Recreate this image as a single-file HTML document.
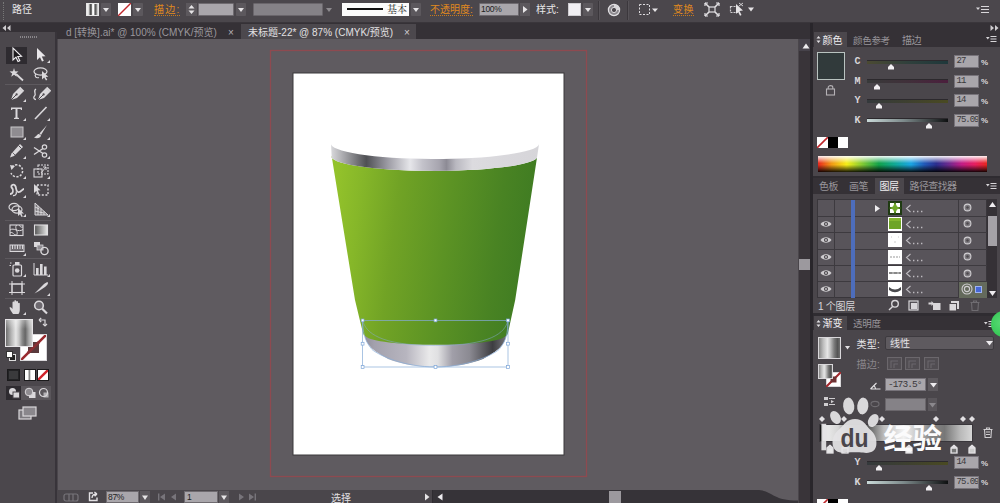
<!DOCTYPE html>
<html lang="zh-CN">
<head>
<meta charset="utf-8">
<title>Illustrator</title>
<style>
*{box-sizing:border-box;margin:0;padding:0}
html,body{width:1000px;height:503px;overflow:hidden;background:#4a464b}
body{position:relative;font-family:"Liberation Sans","Noto Sans CJK SC",sans-serif;font-size:11px;color:#d6d3d6}
.a{position:absolute}
#ctrl{left:0;top:0;width:1000px;height:23px;background:#4b474c;border-bottom:1px solid #3a363b}
#tabs{left:57px;top:23px;width:753px;height:16px;background:#353136}
#canvas{left:58px;top:39px;width:740px;height:451px;background:#5f5b60;overflow:hidden}
#tools{left:0;top:23px;width:57px;height:480px;background:#4b474c;border-right:2px solid #38343a}
#vscroll{left:798px;top:39px;width:12px;height:464px;background:#393439;border-left:1px solid #4a464b}
#status{left:58px;top:490px;width:740px;height:13px;background:#4a464b}
#right{left:810px;top:23px;width:190px;height:480px;background:#4a464b;border-left:3px solid #29262b}

#ctrl .dd{position:absolute;top:3px;height:13px;width:10px;background:#5c585d;border-radius:1px}
#ctrl .dd:after{content:"";position:absolute;left:2px;top:5px;border:3px solid transparent;border-top:4px solid #e6e4e6;border-bottom:0}
#ctrl .dd.dim{background:#55515600}
#ctrl .dd.dim:after{border-top-color:#8d8a8e}
#ctrl .inp{position:absolute;top:3px;height:13px;background:#a9a6ab;border:1px solid #6f6b70;border-radius:1px}
#ctrl .or{position:absolute;top:4px;color:#e08a1e;font-size:10px;line-height:12px;white-space:nowrap;border-bottom:1px dotted #c87a1a;height:12px}
#ctrl .wt{position:absolute;top:4px;color:#e9e7e9;font-size:10px;line-height:12px;white-space:nowrap}
#ctrl .sep{position:absolute;top:1px;width:1px;height:19px;background:#3b373c;border-right:1px solid #575358;box-sizing:content-box}

#tabs .t{position:absolute;top:4px;font-size:10px;line-height:12px;white-space:nowrap}
.lbl{white-space:nowrap;line-height:1}
</style>
</head>
<body>
<div id="ctrl" class="a">
<div class="a" style="left:3px;top:2px;width:2px;height:18px;border-left:1px dotted #777"></div>
<span class="wt" style="left:12px;top:4px">路径</span>
<div class="a" style="left:86px;top:3px;width:13px;height:13px;border:1px solid #e6e6e6;background:linear-gradient(90deg,#f4f4f4 0,#ddd 15%,#555 30%,#444 38%,#eee 50%,#fff 60%,#666 72%,#555 80%,#eee 100%)"></div>
<div class="dd" style="left:101px"></div>
<div class="a" style="left:118px;top:3px;width:13px;height:13px;background:#fff;overflow:hidden"><svg width="13" height="13" viewBox="0 0 13 13"><path d="M0,13 L13,0" stroke="#c0282d" stroke-width="1.4"/></svg></div>
<div class="dd" style="left:133px"></div>
<span class="or" style="left:154px;letter-spacing:1.2px">描边:</span>
<div class="a" style="left:186px;top:3px;width:11px;height:13px;background:#5c585d"><svg width="11" height="13" viewBox="0 0 11 13"><path d="M2.5,5.5 L5.5,2 L8.5,5.5 Z M2.5,7.5 L5.5,11 L8.5,7.5 Z" fill="#e6e4e6"/></svg></div>
<div class="inp" style="left:198px;width:36px"></div>
<div class="dd" style="left:236px"></div>
<div class="inp" style="left:253px;width:70px;background:#858287;border-color:#6a666b"></div>
<div class="dd dim" style="left:324px"></div>
<div class="a" style="left:342px;top:3px;width:67px;height:13px;background:#fbfbfb"><div class="a" style="left:5px;top:5px;width:36px;height:2px;background:#111"></div><span class="a" style="left:45px;top:0;font-size:10px;line-height:13px;color:#222;font-family:'Liberation Serif','Noto Serif CJK SC',serif">基本</span></div>
<div class="dd" style="left:411px"></div>
<span class="or" style="left:430px">不透明度:</span>
<div class="inp" style="left:479px;width:40px"><span class="a" style="left:1px;top:-1px;font-size:8.5px;line-height:13px;color:#222;letter-spacing:-0.3px">100%</span></div>
<div class="a" style="left:520px;top:3px;width:10px;height:13px;background:#5c585d"><svg width="10" height="13" viewBox="0 0 10 13"><path d="M3,3 L7.5,6.5 L3,10 Z" fill="#e6e4e6"/></svg></div>
<span class="wt" style="left:536px">样式:</span>
<div class="a" style="left:568px;top:3px;width:13px;height:13px;background:#f1eff3;border:1px solid #cfcdd1"></div>
<div class="dd" style="left:583px"></div>
<div class="sep" style="left:598px"></div>
<svg class="a" style="left:607px;top:3px" width="14" height="14" viewBox="0 0 14 14"><circle cx="7" cy="7" r="5.6" fill="#8e8b90" stroke="#e2e0e3" stroke-width="1.2"/><circle cx="7" cy="7" r="2.6" fill="#4b474c" stroke="#dcdadd" stroke-width="1"/><path d="M7,1.4 A5.6,5.6 0 0 1 12.6,7 L9.6,7 A2.6,2.6 0 0 0 7,4.4 Z" fill="#d8d6d9"/></svg>
<div class="sep" style="left:627px"></div>
<svg class="a" style="left:638px;top:3px" width="22" height="14" viewBox="0 0 22 14"><rect x="1.5" y="1.5" width="10" height="10" fill="none" stroke="#dedcdf" stroke-width="1" stroke-dasharray="2 1.5"/><path d="M14,5.5 L20,5.5 L17,9 Z" fill="#e6e4e6"/></svg>
<span class="or" style="left:673px;letter-spacing:0.5px">变换</span>
<svg class="a" style="left:704px;top:2px" width="16" height="16" viewBox="0 0 16 16"><rect x="5" y="5" width="6" height="5" fill="none" stroke="#e2e0e3" stroke-width="1.2"/><path d="M1,1 L5,5 M15,1 L11,5 M1,14 L5,10 M15,14 L11,10" stroke="#e2e0e3" stroke-width="1.6"/><path d="M1,1 h3 M1,1 v3 M15,1 h-3 M15,1 v3 M1,14 h3 M1,14 v-3 M15,14 h-3 M15,14 v-3" stroke="#e2e0e3" stroke-width="1.2"/></svg>
<svg class="a" style="left:729px;top:2px" width="28" height="16" viewBox="0 0 28 16"><rect x="1.5" y="4.5" width="7" height="6" fill="none" stroke="#cfcdd0" stroke-width="1.2" stroke-dasharray="2 1"/><path d="M7,2 L14,8.5 L10.5,9 L12.5,13 L11,13.8 L9,9.8 L7,12 Z" fill="#e6e4e6"/><path d="M10,1 l4,3 M14,1 l-4,3" stroke="#cfcdd0" stroke-width="1"/><path d="M19,5.5 L25,5.5 L22,9.5 Z" fill="#e6e4e6"/></svg>
<svg class="a" style="left:976px;top:5px" width="13" height="10" viewBox="0 0 13 10"><path d="M0,2.5 L4,2.5 L2,5 Z" fill="#d8d6d9"/><path d="M5,1.5 h8 M5,4.5 h8 M5,7.5 h8" stroke="#d8d6d9" stroke-width="1.2"/></svg>
</div>
<div id="tabs" class="a">
<span class="t" id="t1" style="left:9px;color:#9a979c">d [转换].ai* @ 100% (CMYK/预览)</span>
<span class="t" style="left:171px;color:#b5b2b6;font-size:10px">×</span>
<div class="a" style="left:184px;top:1px;width:175px;height:15px;background:#4c484d"></div>
<span class="t" id="t2" style="left:191px;color:#e2e0e2">未标题-22* @ 87% (CMYK/预览)</span>
<span class="t" style="left:347px;color:#d2d0d3;font-size:10px">×</span>
</div>
<div id="canvas" class="a">
<svg class="a" style="left:0;top:0" width="740" height="451" viewBox="58 39 740 451">
<defs>
<linearGradient id="gGreen" x1="331" y1="225" x2="538" y2="250" gradientUnits="userSpaceOnUse">
<stop offset="0" stop-color="#93c22b"/><stop offset="0.12" stop-color="#86b729"/><stop offset="0.3" stop-color="#71a325"/><stop offset="0.55" stop-color="#5c9324"/><stop offset="0.8" stop-color="#498323"/><stop offset="1" stop-color="#3d7a22"/>
</linearGradient>
<linearGradient id="gRim" x1="331" y1="0" x2="539" y2="0" gradientUnits="userSpaceOnUse">
<stop offset="0" stop-color="#d9d9dc"/><stop offset="0.06" stop-color="#a9a9ad"/><stop offset="0.17" stop-color="#4f5054"/><stop offset="0.27" stop-color="#9a99a2"/><stop offset="0.38" stop-color="#e6e6ea"/><stop offset="0.44" stop-color="#c3c2ca"/><stop offset="0.52" stop-color="#a7a5af"/><stop offset="0.555" stop-color="#8d8b95"/><stop offset="0.6" stop-color="#b9b8c0"/><stop offset="0.68" stop-color="#dcdbdf"/><stop offset="1" stop-color="#d6d5d9"/>
</linearGradient>
<linearGradient id="gBase" x1="363" y1="0" x2="507" y2="0" gradientUnits="userSpaceOnUse">
<stop offset="0" stop-color="#8f8d98"/><stop offset="0.08" stop-color="#a3a1ad"/><stop offset="0.3" stop-color="#b7b5bf"/><stop offset="0.46" stop-color="#e9e9ea"/><stop offset="0.52" stop-color="#e0e0e2"/><stop offset="0.62" stop-color="#a19fa9"/><stop offset="0.74" stop-color="#8b8a92"/><stop offset="0.9" stop-color="#3d3d41"/><stop offset="1" stop-color="#77777c"/>
</linearGradient>
</defs>
<rect x="270.5" y="50.5" width="316" height="426" fill="none" stroke="#8e4a50" stroke-width="1.3"/>
<rect x="293" y="73" width="271" height="382" fill="#fff" stroke="#3a383b" stroke-width="1"/>
<path d="M364.5,334 C366,345 372,350 388,359 C400,364 418,367 435.5,367 C453,367 471,364 483,359 C499,350 505,345 506.5,334 Z" fill="url(#gBase)"/>
<path d="M331.6,155.8 A102.7,14.2 0 0 0 537,157.5 L515.2,300 L510.8,320 L508,333 Q507.5,336 505,336.5 A70,9.5 0 0 1 366,336.5 Q363.5,336 363,333 L359.8,320 L355,300 Z" fill="url(#gGreen)"/>
<path d="M331,143.2 A104,15.3 0 0 0 539,144.2 L537,157.5 A102.7,14.2 0 0 1 331.6,155.8 Z" fill="url(#gRim)"/>
<g fill="none" stroke="#86acd8" stroke-width="0.7">
<rect x="362.6" y="320.4" width="145.4" height="46.6"/>
<path d="M362.6,320.4 C366,333 380,345.5 435.5,345.5 C491,345.5 505,333 508,320.4" stroke-opacity="0.7"/>
<path d="M362.6,320.4 C363,332 364,340 372,349.5 C380,356 405,367 435.5,367 C466,367 491,356 499,349.5 C507,340 507.6,332 508,320.4"/>
</g>
<g fill="#fff" stroke="#7ea6d8" stroke-width="0.7">
<rect x="361.2" y="319" width="2.8" height="2.8"/><rect x="434.1" y="319" width="2.8" height="2.8"/><rect x="506.6" y="319" width="2.8" height="2.8"/>
<rect x="361.2" y="342.3" width="2.8" height="2.8"/><rect x="506.6" y="342.3" width="2.8" height="2.8"/>
<rect x="361.2" y="365.6" width="2.8" height="2.8"/><rect x="434.1" y="365.6" width="2.8" height="2.8"/><rect x="506.6" y="365.6" width="2.8" height="2.8"/>
</g>
</svg>
</div>
<div id="tools" class="a">
<div class="a" style="left:0;top:0;width:57px;height:9px;background:#353136"></div>
<svg class="a" style="left:2px;top:2px" width="10" height="6" viewBox="0 0 10 6"><path d="M4,0 L4,6 L0.5,3 Z M8.5,0 L8.5,6 L5,3 Z" fill="#cfcdd0"/></svg>
<div class="a" style="left:20px;top:13px;width:17px;height:2px;border-top:1px dotted #8a878b;border-bottom:1px dotted #8a878b"></div>
<div class="a" style="left:6px;top:24px;width:21px;height:17px;background:#2e2b30"></div>
<svg class="a" style="left:6.5px;top:23px" width="20" height="18" viewBox="0 0 20 18" fill="none" stroke="#dad8db" stroke-width="1.2"><path d="M6,2 L6,14 L9,11.2 L11,15.5 L12.8,14.7 L10.8,10.5 L14.5,10.3 Z" fill="#1d1b1e" stroke="#f2f0f3" stroke-width="1.1"/></svg>
<svg class="a" style="left:30.5px;top:23px" width="20" height="18" viewBox="0 0 20 18" fill="none" stroke="#dad8db" stroke-width="1.2"><path d="M6,2 L6,14 L9,11.2 L11,15.5 L12.8,14.7 L10.8,10.5 L14.5,10.3 Z" fill="#e9e7ea" stroke="none"/><path d="M19,14 L19,17 L16,17 Z" fill="#dad8db" stroke="none"/></svg>
<svg class="a" style="left:6.5px;top:42px" width="20" height="18" viewBox="0 0 20 18" fill="none" stroke="#dad8db" stroke-width="1.2"><path d="M7,3 L8,6.2 L11.5,6.5 L8.8,8.4 L9.8,11.8 L7,9.7 L4.2,11.8 L5.2,8.4 L2.5,6.5 L6,6.2 Z" fill="#dad8db" stroke="none"/><path d="M9,9 L16,15.5" stroke-width="1.8"/></svg>
<svg class="a" style="left:30.5px;top:42px" width="20" height="18" viewBox="0 0 20 18" fill="none" stroke="#dad8db" stroke-width="1.2"><ellipse cx="9.5" cy="6.5" rx="6.5" ry="3.6"/><path d="M5,9 C3,11 5,13.5 8,12.5"/><path d="M11,6 L11,14.5 L13.2,12.5 L15,15.5 L16.3,14.8 L14.7,12 L17.3,11.8 Z" fill="#dad8db" stroke="none"/></svg>
<svg class="a" style="left:6.5px;top:61.5px" width="20" height="18" viewBox="0 0 20 18" fill="none" stroke="#dad8db" stroke-width="1.2"><path d="M4,15 L6,9 L12,3 L16,7 L10,13 Z" fill="#dad8db" stroke="none"/><path d="M4,15 L9,10" stroke="#4b474c" stroke-width="1"/><circle cx="9.6" cy="9.4" r="1.1" fill="#4b474c" stroke="none"/><path d="M12.5,2.5 L16.5,6.5" stroke-width="2"/><path d="M19,14 L19,17 L16,17 Z" fill="#dad8db" stroke="none"/></svg>
<svg class="a" style="left:30.5px;top:61.5px" width="20" height="18" viewBox="0 0 20 18" fill="none" stroke="#dad8db" stroke-width="1.2"><g transform="translate(3,0)"><path d="M4,15 L6,9 L12,3 L16,7 L10,13 Z" fill="#dad8db" stroke="none"/><path d="M4,15 L9,10" stroke="#4b474c" stroke-width="1"/><circle cx="9.6" cy="9.4" r="1.1" fill="#4b474c" stroke="none"/><path d="M12.5,2.5 L16.5,6.5" stroke-width="2"/></g><path d="M5,4 C1.5,6 6,9 3.5,11 C2,12.5 3,14.5 5,14.5" stroke-width="1.3"/></svg>
<svg class="a" style="left:6.5px;top:80.5px" width="20" height="18" viewBox="0 0 20 18" fill="none" stroke="#dad8db" stroke-width="1.2"><path d="M4,3.5 H15 V6 H14 L13.5,5 H10.5 V13.5 L12,14 V15 H7 V14 L8.5,13.5 V5 H5.5 L5,6 H4 Z" fill="#dad8db" stroke="none"/><path d="M19,14 L19,17 L16,17 Z" fill="#dad8db" stroke="none"/></svg>
<svg class="a" style="left:30.5px;top:80.5px" width="20" height="18" viewBox="0 0 20 18" fill="none" stroke="#dad8db" stroke-width="1.2"><path d="M4,15 L15.5,3" stroke-width="1.6"/><path d="M19,14 L19,17 L16,17 Z" fill="#dad8db" stroke="none"/></svg>
<svg class="a" style="left:6.5px;top:100px" width="20" height="18" viewBox="0 0 20 18" fill="none" stroke="#dad8db" stroke-width="1.2"><rect x="4" y="4" width="12" height="10" fill="#8f8c91" stroke="#c9c7ca" stroke-width="1"/><path d="M19,14 L19,17 L16,17 Z" fill="#dad8db" stroke="none"/></svg>
<svg class="a" style="left:30.5px;top:100px" width="20" height="18" viewBox="0 0 20 18" fill="none" stroke="#dad8db" stroke-width="1.2"><path d="M16,2 L8.5,10.5 L10,12 Z" fill="#dad8db" stroke="none"/><path d="M8,11 C6,11 5.5,13.5 3,14.5 C6,16 9.5,15 10,12.5 Z" fill="#dad8db" stroke="none"/><path d="M19,14 L19,17 L16,17 Z" fill="#dad8db" stroke="none"/></svg>
<svg class="a" style="left:6.5px;top:119px" width="20" height="18" viewBox="0 0 20 18" fill="none" stroke="#dad8db" stroke-width="1.2"><path d="M13,2 L16,5 L7,14 L3,15.5 L4.5,11.5 Z" fill="#dad8db" stroke="none"/><path d="M11.5,3.5 L14.5,6.5" stroke="#4b474c" stroke-width="1"/><path d="M5.5,10.5 L8,13" stroke="#4b474c" stroke-width="0.8"/><path d="M19,14 L19,17 L16,17 Z" fill="#dad8db" stroke="none"/></svg>
<svg class="a" style="left:30.5px;top:119px" width="20" height="18" viewBox="0 0 20 18" fill="none" stroke="#dad8db" stroke-width="1.2"><circle cx="13.5" cy="5" r="2.2"/><circle cx="13.5" cy="13" r="2.2"/><path d="M12,6.5 L3,12.5 M12,11.5 L3,5.5" stroke-width="1.4"/><path d="M19,14 L19,17 L16,17 Z" fill="#dad8db" stroke="none"/></svg>
<svg class="a" style="left:6.5px;top:138.5px" width="20" height="18" viewBox="0 0 20 18" fill="none" stroke="#dad8db" stroke-width="1.2"><path d="M5,5 A6,6 0 1 1 4,11" stroke-dasharray="2.2 1.4" stroke-width="1.5"/><path d="M3,3 L8,4 L4.5,8 Z" fill="#dad8db" stroke="none"/><path d="M19,14 L19,17 L16,17 Z" fill="#dad8db" stroke="none"/></svg>
<svg class="a" style="left:30.5px;top:138.5px" width="20" height="18" viewBox="0 0 20 18" fill="none" stroke="#dad8db" stroke-width="1.2"><rect x="3" y="7" width="8" height="8" stroke-width="1.1"/><rect x="7" y="3" width="10" height="9" stroke-width="1.1" stroke-dasharray="2 1"/><path d="M10,11 L15,5 M15,5 h-3 M15,5 v3" stroke-width="1"/><path d="M19,14 L19,17 L16,17 Z" fill="#dad8db" stroke="none"/></svg>
<svg class="a" style="left:6.5px;top:157.5px" width="20" height="18" viewBox="0 0 20 18" fill="none" stroke="#dad8db" stroke-width="1.2"><path d="M3,13 C6,13 7,9 5,7 C3,5 6,2.5 8,4.5 C10,6.5 8,10 11,11 C14,12 15,8 17,8" stroke-width="1.8"/><path d="M6,14.5 C9,15 10,12 9,10.5" stroke-width="1.3"/><path d="M19,14 L19,17 L16,17 Z" fill="#dad8db" stroke="none"/></svg>
<svg class="a" style="left:30.5px;top:157.5px" width="20" height="18" viewBox="0 0 20 18" fill="none" stroke="#dad8db" stroke-width="1.2"><rect x="6" y="4" width="11" height="10" stroke-dasharray="2 1.6" stroke-width="1.3"/><path d="M3,3 L3,12 L5.3,10 L7,13.5 L8.3,12.8 L6.8,9.5 L9.5,9.3 Z" fill="#dad8db" stroke="none"/></svg>
<svg class="a" style="left:6.5px;top:177px" width="20" height="18" viewBox="0 0 20 18" fill="none" stroke="#dad8db" stroke-width="1.2"><ellipse cx="7" cy="7" rx="5" ry="3.6"/><ellipse cx="10" cy="9.5" rx="5" ry="3.6"/><path d="M11,8 L11,16 L13,14.2 L14.6,17 L15.8,16.4 L14.4,13.6 L17,13.4 Z" fill="#dad8db" stroke="none"/><path d="M19,14 L19,17 L16,17 Z" fill="#dad8db" stroke="none"/></svg>
<svg class="a" style="left:30.5px;top:177px" width="20" height="18" viewBox="0 0 20 18" fill="none" stroke="#dad8db" stroke-width="1.2"><path d="M4,3 V15 L17,15 Z M7,5.8 V15 M10,8.5 V15 M13,11.3 V15 M4,7 L8.3,9 M4,11 L12.5,13" stroke-width="1"/><path d="M4,3 L4,15 L17,15 Z" fill="#dad8db" fill-opacity="0.35" stroke="none"/><path d="M19,14 L19,17 L16,17 Z" fill="#dad8db" stroke="none"/></svg>
<svg class="a" style="left:6.5px;top:197.5px" width="20" height="18" viewBox="0 0 20 18" fill="none" stroke="#dad8db" stroke-width="1.2"><rect x="3" y="4" width="13" height="10.5" stroke-width="1.1"/><path d="M3,9 C7,6 11,12 16,8.5 M9.5,4 C7,8 12,10 9.5,14.5 M3,12 C6,10 6,14 9,14 M16,6 C13,7 13,4.5 12,4" stroke-width="1"/></svg>
<svg class="a" style="left:30.5px;top:197.5px" width="20" height="18" viewBox="0 0 20 18" fill="none" stroke="#dad8db" stroke-width="1.2"><defs><linearGradient id="tg" x1="0" x2="1"><stop offset="0" stop-color="#555"/><stop offset="1" stop-color="#e8e8e8"/></linearGradient></defs><rect x="3.5" y="4" width="13" height="10" fill="url(#tg)" stroke="#e0dee1" stroke-width="1.1"/></svg>
<svg class="a" style="left:6.5px;top:216px" width="20" height="18" viewBox="0 0 20 18" fill="none" stroke="#dad8db" stroke-width="1.2"><rect x="3" y="6" width="14" height="6.5" fill="#dad8db" fill-opacity="0.25" stroke-width="1"/><path d="M5.5,6 v4 M8,6 v4 M10.5,6 v4 M13,6 v4 M15.5,6 v4" stroke-width="1"/><path d="M19,14 L19,17 L16,17 Z" fill="#dad8db" stroke="none"/></svg>
<svg class="a" style="left:30.5px;top:216px" width="20" height="18" viewBox="0 0 20 18" fill="none" stroke="#dad8db" stroke-width="1.2"><rect x="3" y="3" width="6" height="5" fill="#dad8db" stroke="none"/><rect x="6" y="6" width="6" height="5" fill="#8f8c91" stroke="#dad8db" stroke-width="0.8"/><circle cx="13.5" cy="12" r="3.6" stroke-width="1.4"/></svg>
<svg class="a" style="left:6.5px;top:236.5px" width="20" height="18" viewBox="0 0 20 18" fill="none" stroke="#dad8db" stroke-width="1.2"><rect x="6" y="5" width="8.5" height="11" rx="1" stroke-width="1.2"/><rect x="8" y="2" width="4.5" height="3" fill="#dad8db" stroke="none"/><circle cx="10.2" cy="10.5" r="2.3" fill="#dad8db" stroke="none"/><path d="M3,3 h1.5 M2.5,5.5 h1.5" stroke-width="1"/><path d="M19,14 L19,17 L16,17 Z" fill="#dad8db" stroke="none"/></svg>
<svg class="a" style="left:30.5px;top:236.5px" width="20" height="18" viewBox="0 0 20 18" fill="none" stroke="#dad8db" stroke-width="1.2"><path d="M3,3 V15 H17" stroke-width="1"/><rect x="5" y="8" width="2.6" height="7" fill="#dad8db" stroke="none"/><rect x="9" y="4" width="2.6" height="11" fill="#dad8db" stroke="none"/><rect x="13" y="6.5" width="2.6" height="8.5" fill="#dad8db" stroke="none"/><path d="M19,14 L19,17 L16,17 Z" fill="#dad8db" stroke="none"/></svg>
<svg class="a" style="left:6.5px;top:256px" width="20" height="18" viewBox="0 0 20 18" fill="none" stroke="#dad8db" stroke-width="1.2"><rect x="5" y="5" width="10" height="8.5" stroke-width="1.1"/><path d="M5,2 V16 M15,2 V16 M2,5 H18 M2,13.5 H18" stroke-width="1"/></svg>
<svg class="a" style="left:30.5px;top:256px" width="20" height="18" viewBox="0 0 20 18" fill="none" stroke="#dad8db" stroke-width="1.2"><path d="M3.5,14.5 L9,9 L13,5 C15,3.5 16.5,3 17,3.5 C17.5,4 16,6.5 14,8 L8,12 Z" fill="#dad8db" stroke="none"/><path d="M19,14 L19,17 L16,17 Z" fill="#dad8db" stroke="none"/></svg>
<svg class="a" style="left:6.5px;top:275px" width="20" height="18" viewBox="0 0 20 18" fill="none" stroke="#dad8db" stroke-width="1.2"><path d="M6,16 C4,13 3,11.5 2.5,9.5 C3.5,8.8 4.5,9.5 5.5,11 V4.5 C5.5,3.3 7.3,3.3 7.3,4.5 V8.5 V3.2 C7.3,2 9.2,2 9.2,3.2 V8.5 V3.8 C9.2,2.6 11,2.6 11,3.8 V9 V5.5 C11,4.4 12.8,4.4 12.8,5.5 V12 C12.8,14 12,15 11.5,16 Z" fill="#dad8db" stroke="none"/><path d="M19,14 L19,17 L16,17 Z" fill="#dad8db" stroke="none"/></svg>
<svg class="a" style="left:30.5px;top:275px" width="20" height="18" viewBox="0 0 20 18" fill="none" stroke="#dad8db" stroke-width="1.2"><circle cx="8" cy="7.5" r="4.3" stroke-width="1.6" fill="#8f8c91" fill-opacity="0.5"/><path d="M11.2,10.8 L16,15.5" stroke-width="2.2"/></svg>
<div class="a" style="left:5px;top:61px;width:46px;height:1px;background:#5d595e"></div>
<div class="a" style="left:5px;top:196.5px;width:46px;height:1px;background:#5d595e"></div>
<div class="a" style="left:5px;top:235px;width:46px;height:1px;background:#5d595e"></div>
<div class="a" style="left:5px;top:274.5px;width:46px;height:1px;background:#5d595e"></div>
<div class="a" style="left:20px;top:311px;width:27px;height:27px;background:#fff;border:1px solid #d9d7da;overflow:hidden"><svg width="27" height="27" viewBox="0 0 27 27" class="a" style="left:-1px;top:-1px"><path d="M0,27 L27,0" stroke="#9a2a2e" stroke-width="2.6"/><rect x="8" y="8" width="11" height="11" fill="#5a3a3c"/><path d="M8,19 L19,8" stroke="#8a3034" stroke-width="2.6"/></svg></div>
<div class="a" style="left:5px;top:296px;width:28px;height:28px;border:1px solid #e6e4e7;background:linear-gradient(180deg,rgba(255,255,255,.35) 0,rgba(255,255,255,0) 35%),linear-gradient(90deg,#6e6e6e 0,#b4b4b4 20%,#e6e6e6 38%,#c4c4c4 50%,#8a8a8a 62%,#666 74%,#a8a8a8 88%,#cfcfcf 100%)"></div>
<svg class="a" style="left:37px;top:294px" width="12" height="12" viewBox="0 0 12 12" fill="none" stroke="#dad8db" stroke-width="1.2"><path d="M2,3 H8 V9"/><path d="M2,3 l2.2,-2 M2,3 l2.2,2 M8,9 l-2,-2.2 M8,9 l2,-2.2"/></svg>
<svg class="a" style="left:6px;top:328px" width="10" height="10" viewBox="0 0 10 10"><rect x="3.5" y="3.5" width="6" height="6" fill="#222" stroke="#ddd" stroke-width="1"/><rect x="0.5" y="0.5" width="6" height="6" fill="#fff" stroke="#333" stroke-width="1"/></svg>
<div class="a" style="left:7px;top:346px;width:13px;height:12px;border:1px solid #1b1a1c;background:#3a3a3c;box-shadow:inset 0 0 0 1px #232325"></div>
<div class="a" style="left:24px;top:346px;width:12px;height:12px;border:1px solid #1b1a1c;background:linear-gradient(90deg,#fff 0,#fff 25%,#888 45%,#fff 60%,#fff 100%)"></div>
<div class="a" style="left:37px;top:346px;width:12px;height:12px;border:1px solid #1b1a1c;background:#fff;overflow:hidden"><svg width="10" height="10" viewBox="0 0 10 10"><path d="M0,10 L10,0" stroke="#d0222a" stroke-width="2.4"/></svg></div>
<div class="a" style="left:21px;top:363px;width:30px;height:14px;background:#5a565b"></div>
<div class="a" style="left:6px;top:363px;width:15px;height:14px;background:#2e2b30"></div>
<svg class="a" style="left:8px;top:364px" width="13" height="13" viewBox="0 0 13 13"><rect x="1" y="1" width="7" height="7" rx="3.5" fill="#dad8db" stroke="none"/><rect x="5" y="5" width="6.5" height="6" fill="#dad8db" stroke="#4b474c" stroke-width="1"/></svg>
<svg class="a" style="left:24px;top:364px" width="13" height="13" viewBox="0 0 13 13"><rect x="5" y="5" width="6.5" height="6" fill="#dad8db"/><circle cx="5" cy="5" r="3.8" fill="#8f8c91" stroke="#dad8db" stroke-width="1"/></svg>
<svg class="a" style="left:38px;top:364px" width="13" height="13" viewBox="0 0 13 13"><circle cx="5.5" cy="5.5" r="4" fill="none" stroke="#dad8db" stroke-width="1.2"/><path d="M5.5,5.5 h5 v5 h-5 Z" fill="#dad8db" fill-opacity="0.7"/></svg>
<svg class="a" style="left:18px;top:383px" width="20" height="15" viewBox="0 0 20 15"><rect x="1" y="4" width="12" height="9" fill="#7d7a7f" stroke="#dad8db" stroke-width="1.2"/><rect x="5" y="1" width="13" height="9" fill="#8a878c" stroke="#dad8db" stroke-width="1.2"/></svg>
</div><!--/tools-->
<div id="vscroll" class="a">
<div class="a" style="left:0;top:0;width:11px;height:12px;background:#46424a"></div>
<svg class="a" style="left:3px;top:4px" width="8" height="6" viewBox="0 0 8 6"><path d="M0.5,5.5 L7.5,5.5 L4,0.5 Z" fill="#eeecef"/></svg>
<div class="a" style="left:0;top:220px;width:12px;height:11px;background:#9c999e"></div>
</div>
<div id="status" class="a">
<svg class="a" style="left:5px;top:3px" width="17" height="9" viewBox="0 0 17 9" fill="none" stroke="#77747a" stroke-width="1.2"><rect x="1" y="1" width="14" height="7" rx="2"/><path d="M6,1 v7 M10,1 v7"/></svg>
<svg class="a" style="left:30px;top:1px" width="11" height="11" viewBox="0 0 11 11" fill="none" stroke="#e2e0e3" stroke-width="1.4"><path d="M5,2 H1.5 V9.5 H9 V6.5"/><path d="M4,7 C4,4 6,3 9,3 M9,3 l-2.6,-2 M9,3 l-2.4,2.2" stroke-width="1.3"/></svg>
<div class="a" style="left:48px;top:1px;width:33px;height:12px;background:#a9a6ab;border:1px solid #6f6b70"><span class="a" style="left:1px;top:-1px;font-size:8.5px;line-height:12px;color:#222;letter-spacing:-0.3px">87%</span></div>
<div class="a" style="left:82px;top:1px;width:10px;height:12px;background:#5c585d"><svg width="10" height="12" viewBox="0 0 10 12"><path d="M2,4.5 L8,4.5 L5,9 Z" fill="#e6e4e6"/></svg></div>
<svg class="a" style="left:99px;top:3px" width="21" height="8" viewBox="0 0 21 8" fill="#77747a"><rect x="1" y="0.5" width="1.4" height="7"/><path d="M8,0.5 V7.5 L3,4 Z M19,0.5 V7.5 L14,4 Z"/></svg>
<div class="a" style="left:126px;top:1px;width:34px;height:12px;background:#a9a6ab;border:1px solid #6f6b70"><span class="a" style="left:2px;top:-1px;font-size:8.5px;line-height:12px;color:#222">1</span></div>
<div class="a" style="left:161px;top:1px;width:10px;height:12px;background:#5c585d"><svg width="10" height="12" viewBox="0 0 10 12"><path d="M2,4.5 L8,4.5 L5,9 Z" fill="#e6e4e6"/></svg></div>
<svg class="a" style="left:179px;top:3px" width="21" height="8" viewBox="0 0 21 8" fill="#77747a"><path d="M2,0.5 V7.5 L7,4 Z M12,0.5 V7.5 L17,4 Z"/><rect x="17.6" y="0.5" width="1.4" height="7"/></svg>
<span class="a lbl" style="left:273px;top:4px;font-size:10px;color:#e2e0e3">选择</span>
<svg class="a" style="left:366px;top:3px" width="6" height="8" viewBox="0 0 6 8"><path d="M1,0.5 V7.5 L5.5,4 Z" fill="#e6e4e6"/></svg>
<div class="a" style="left:374px;top:0;width:1px;height:13px;background:#2f2c31"></div>
<div class="a" style="left:375px;top:0;width:324px;height:13px;background:#363338"></div>
<svg class="a" style="left:699px;top:0" width="41" height="13" viewBox="0 0 41 13"><rect width="41" height="13" fill="#5f5b60"/><path d="M0,0 C16,0 14,10.5 41,10.5 L41,13 L0,13 Z" fill="#363338"/></svg>
<svg class="a" style="left:379px;top:3px" width="6" height="8" viewBox="0 0 6 8"><path d="M5.5,0.5 V7.5 L0.5,4 Z" fill="#eeecef"/></svg>
<div class="a" style="left:551px;top:1px;width:12px;height:12px;background:#9c999e"></div>
</div>
<div id="right" class="a">
<div class="a" style="left:0px;top:0px;width:187px;height:9px;background:#353136"></div>
<svg class="a" style="left:177px;top:2px" width="9" height="6" viewBox="0 0 9 6"><path d="M0.5,0 L0.5,6 L4,3 Z M5,0 L5,6 L8.5,3 Z" fill="#cfcdd0"/></svg>
<div class="a" style="left:0px;top:9px;width:187px;height:15px;background:#353136"></div>
<div class="a" style="left:1px;top:9px;width:33px;height:15px;background:#4b474c"></div>
<svg class="a" style="left:3px;top:12px" width="5" height="9" viewBox="0 0 5 9"><path d="M0.5,3.5 L2.5,1 L4.5,3.5 Z M0.5,5.5 L2.5,8 L4.5,5.5 Z" fill="#e2e0e3"/></svg>
<span class="a lbl" style="left:9.5px;top:11.5px;font-size:10px;color:#efedf0;line-height:11px">颜色</span>
<span class="a lbl" style="left:40px;top:11.5px;font-size:9.5px;color:#98959a;line-height:11px;letter-spacing:-0.3px">颜色参考</span>
<span class="a lbl" style="left:89px;top:11.5px;font-size:10px;color:#98959a;line-height:11px;letter-spacing:-0.5px">描边</span>
<svg class="a" style="left:173px;top:12px" width="11" height="8" viewBox="0 0 11 8"><path d="M0,2 L3.6,2 L1.8,4.4 Z" fill="#d8d6d9"/><path d="M4.5,1.5 h6 M4.5,4 h6 M4.5,6.5 h6" stroke="#d8d6d9" stroke-width="1.1"/></svg>
<div class="a" style="left:4px;top:29px;width:28px;height:28px;background:#313a3b;border:1px solid #b9c3c0"></div>
<svg class="a" style="left:12px;top:61px" width="11" height="12" viewBox="0 0 11 12" fill="none" stroke="#b4b1b5" stroke-width="1.1"><rect x="1.5" y="5" width="8" height="6"/><path d="M3.2,5 V3.5 C3.2,1 7.8,1 7.8,3.5 V5"/></svg>
<span class="a lbl" style="left:41.5px;top:33px;font-size:10px;font-weight:bold;color:#d9d7da;line-height:11px;font-family:'Liberation Mono',monospace">C</span>
<div class="a" style="left:54px;top:36.5px;width:81px;height:4px;background:linear-gradient(90deg,#4b4a32,#30403c 50%,#1f383b);border-top:1px solid #2c292d"></div>
<svg class="a" style="left:75px;top:41px" width="6" height="6" viewBox="0 0 6 6"><path d="M3,0 L6,3 L6,5.5 L0,5.5 L0,3 Z" fill="#f2f0f3"/></svg>
<div class="a" style="left:140.5px;top:32px;width:25.5px;height:13px;background:#a9a6ab;border:1px solid #77737a;overflow:hidden"><span class="a lbl" style="left:2px;top:0;font-size:9px;line-height:11px;color:#3a383b;font-family:'Liberation Mono',monospace;letter-spacing:-1px">27</span></div>
<span class="a lbl" style="left:168px;top:33.5px;font-size:8px;color:#d9d7da;line-height:11px;font-weight:bold">%</span>
<span class="a lbl" style="left:41.5px;top:52.5px;font-size:10px;font-weight:bold;color:#d9d7da;line-height:11px;font-family:'Liberation Mono',monospace">M</span>
<div class="a" style="left:54px;top:56px;width:81px;height:4px;background:linear-gradient(90deg,#383a3a,#40303a 50%,#4b1f3d);border-top:1px solid #2c292d"></div>
<svg class="a" style="left:61px;top:60.5px" width="6" height="6" viewBox="0 0 6 6"><path d="M3,0 L6,3 L6,5.5 L0,5.5 L0,3 Z" fill="#f2f0f3"/></svg>
<div class="a" style="left:140.5px;top:51.5px;width:25.5px;height:13px;background:#a9a6ab;border:1px solid #77737a;overflow:hidden"><span class="a lbl" style="left:2px;top:0;font-size:9px;line-height:11px;color:#3a383b;font-family:'Liberation Mono',monospace;letter-spacing:-1px">11</span></div>
<span class="a lbl" style="left:168px;top:53px;font-size:8px;color:#d9d7da;line-height:11px;font-weight:bold">%</span>
<span class="a lbl" style="left:41.5px;top:72px;font-size:10px;font-weight:bold;color:#d9d7da;line-height:11px;font-family:'Liberation Mono',monospace">Y</span>
<div class="a" style="left:54px;top:75.5px;width:81px;height:4px;background:linear-gradient(90deg,#34393c,#3e4030 50%,#4a4a22);border-top:1px solid #2c292d"></div>
<svg class="a" style="left:63px;top:80px" width="6" height="6" viewBox="0 0 6 6"><path d="M3,0 L6,3 L6,5.5 L0,5.5 L0,3 Z" fill="#f2f0f3"/></svg>
<div class="a" style="left:140.5px;top:71px;width:25.5px;height:13px;background:#a9a6ab;border:1px solid #77737a;overflow:hidden"><span class="a lbl" style="left:2px;top:0;font-size:9px;line-height:11px;color:#3a383b;font-family:'Liberation Mono',monospace;letter-spacing:-1px">14</span></div>
<span class="a lbl" style="left:168px;top:72.5px;font-size:8px;color:#d9d7da;line-height:11px;font-weight:bold">%</span>
<span class="a lbl" style="left:41.5px;top:91.5px;font-size:10px;font-weight:bold;color:#d9d7da;line-height:11px;font-family:'Liberation Mono',monospace">K</span>
<div class="a" style="left:54px;top:95px;width:81px;height:4px;background:linear-gradient(90deg,#c9d9d8,#7d8a8b 45%,#0e1011);border-top:1px solid #2c292d"></div>
<svg class="a" style="left:112.5px;top:99.5px" width="6" height="6" viewBox="0 0 6 6"><path d="M3,0 L6,3 L6,5.5 L0,5.5 L0,3 Z" fill="#f2f0f3"/></svg>
<div class="a" style="left:140.5px;top:90.5px;width:25.5px;height:13px;background:#a9a6ab;border:1px solid #77737a;overflow:hidden"><span class="a lbl" style="left:2px;top:0;font-size:9px;line-height:11px;color:#3a383b;font-family:'Liberation Mono',monospace;letter-spacing:-1px">75.09</span></div>
<span class="a lbl" style="left:168px;top:92px;font-size:8px;color:#d9d7da;line-height:11px;font-weight:bold">%</span>
<div class="a" style="left:4px;top:114px;width:10.5px;height:11px;background:#fff;overflow:hidden"><svg width="11" height="11" viewBox="0 0 11 11"><path d="M0,11 L11,0" stroke="#c0282d" stroke-width="1.6"/></svg></div>
<div class="a" style="left:14.5px;top:114px;width:10.5px;height:11px;background:#000"></div>
<div class="a" style="left:25px;top:114px;width:10px;height:11px;background:#fff"></div>
<div class="a" style="left:5px;top:132.5px;width:169px;height:16px;background:linear-gradient(180deg,rgba(255,255,255,.95) 0,rgba(255,255,255,0) 45%,rgba(0,0,0,0) 55%,rgba(0,0,0,.9) 100%),linear-gradient(90deg,#e8261e 0,#f29a16 8%,#f5ee19 17%,#7ac736 27%,#12a34b 36%,#10a99a 46%,#1aa5e3 55%,#2159b8 63%,#2b2e8e 70%,#6a2a8f 77%,#c21d86 85%,#e81f5f 93%,#e8261e 100%)"></div>
<div class="a" style="left:0px;top:153px;width:187px;height:2px;background:#2f2c31"></div>
<div class="a" style="left:0px;top:155px;width:187px;height:16px;background:#353136"></div>
<div class="a" style="left:61.5px;top:155px;width:29px;height:16px;background:#4b474c"></div>
<span class="a lbl" style="left:6px;top:158px;font-size:10px;color:#98959a;line-height:11px;letter-spacing:-0.5px">色板</span>
<span class="a lbl" style="left:36px;top:158px;font-size:10px;color:#98959a;line-height:11px;letter-spacing:-0.5px">画笔</span>
<span class="a lbl" style="left:66.5px;top:158px;font-size:10px;color:#efedf0;line-height:11px;letter-spacing:-0.5px">图层</span>
<span class="a lbl" style="left:96.5px;top:158px;font-size:10px;color:#98959a;line-height:11px;letter-spacing:-0.6px">路径查找器</span>
<svg class="a" style="left:173px;top:159px" width="11" height="8" viewBox="0 0 11 8"><path d="M0,2 L3.6,2 L1.8,4.4 Z" fill="#d8d6d9"/><path d="M4.5,1.5 h6 M4.5,4 h6 M4.5,6.5 h6" stroke="#d8d6d9" stroke-width="1.1"/></svg>
<div class="a" style="left:4px;top:176px;width:170px;height:99px;background:#58545a;border:1px solid #39363b"></div>
<svg class="a" style="left:75px;top:177.6px" width="14" height="14" viewBox="0 0 14 14"><rect width="14" height="14" fill="#1f3a12"/><path d="M2,2 h4 v4 h-4 Z M8,2 h4 v4 h-4 Z M2,8 h4 v4 h-4 Z M8,8 h4 v4 h-4 Z" fill="#fff"/><path d="M7,1 L9,5.5 L13,7 L9,8.5 L7,13 L5,8.5 L1,7 L5,5.5 Z" fill="#6fa82a"/></svg>
<svg class="a" style="left:92px;top:180.6px" width="19" height="9" viewBox="0 0 19 9" fill="none" stroke="#bdbabf" stroke-width="1.1"><path d="M5.5,1 L1.5,4.5 L5.5,8"/><path d="M8,7.5 h1.4 M12,7.5 h1.4 M16,7.5 h1.4" stroke-width="1.4"/></svg>
<svg class="a" style="left:149.5px;top:180.1px" width="9" height="9" viewBox="0 0 9 9"><circle cx="4.5" cy="4.5" r="3.4" fill="#7d7a7f" stroke="#cfcdd0" stroke-width="1.1"/><circle cx="4.5" cy="4.5" r="1.2" fill="#4b474c"/></svg>
<div class="a" style="left:5px;top:192.7px;width:169px;height:1px;background:#3d3a3f"></div>
<svg class="a" style="left:6.5px;top:196.85px" width="12" height="8" viewBox="0 0 12 8"><path d="M0.5,4 C3,0.3 9,0.3 11.5,4 C9,7.7 3,7.7 0.5,4 Z" fill="#cfcdd0"/><circle cx="6" cy="4" r="2.1" fill="#4b474c"/><circle cx="6" cy="4" r="0.9" fill="#cfcdd0"/></svg>
<svg class="a" style="left:75px;top:193.85px" width="14" height="14" viewBox="0 0 14 14"><rect width="14" height="14" fill="#fff"/><rect x="1" y="1" width="12" height="11" fill="#6ea427"/><rect x="1" y="1" width="12" height="3" fill="#84b62f"/></svg>
<svg class="a" style="left:92px;top:196.85px" width="19" height="9" viewBox="0 0 19 9" fill="none" stroke="#bdbabf" stroke-width="1.1"><path d="M5.5,1 L1.5,4.5 L5.5,8"/><path d="M8,7.5 h1.4 M12,7.5 h1.4 M16,7.5 h1.4" stroke-width="1.4"/></svg>
<svg class="a" style="left:149.5px;top:196.35px" width="9" height="9" viewBox="0 0 9 9"><circle cx="4.5" cy="4.5" r="3.4" fill="#7d7a7f" stroke="#cfcdd0" stroke-width="1.1"/><circle cx="4.5" cy="4.5" r="1.2" fill="#4b474c"/></svg>
<div class="a" style="left:5px;top:209px;width:169px;height:1px;background:#3d3a3f"></div>
<svg class="a" style="left:6.5px;top:213.25px" width="12" height="8" viewBox="0 0 12 8"><path d="M0.5,4 C3,0.3 9,0.3 11.5,4 C9,7.7 3,7.7 0.5,4 Z" fill="#cfcdd0"/><circle cx="6" cy="4" r="2.1" fill="#4b474c"/><circle cx="6" cy="4" r="0.9" fill="#cfcdd0"/></svg>
<svg class="a" style="left:75px;top:210.25px" width="14" height="14" viewBox="0 0 14 14"><rect width="14" height="14" fill="#fff"/><path d="M3,4 h1 M10,4 h1 M6,9 h2" stroke="#ccc" stroke-width="1"/></svg>
<svg class="a" style="left:92px;top:213.25px" width="19" height="9" viewBox="0 0 19 9" fill="none" stroke="#bdbabf" stroke-width="1.1"><path d="M5.5,1 L1.5,4.5 L5.5,8"/><path d="M8,7.5 h1.4 M12,7.5 h1.4 M16,7.5 h1.4" stroke-width="1.4"/></svg>
<svg class="a" style="left:149.5px;top:212.75px" width="9" height="9" viewBox="0 0 9 9"><circle cx="4.5" cy="4.5" r="3.4" fill="#7d7a7f" stroke="#cfcdd0" stroke-width="1.1"/><circle cx="4.5" cy="4.5" r="1.2" fill="#4b474c"/></svg>
<div class="a" style="left:5px;top:225.5px;width:169px;height:1px;background:#3d3a3f"></div>
<svg class="a" style="left:6.5px;top:229.75px" width="12" height="8" viewBox="0 0 12 8"><path d="M0.5,4 C3,0.3 9,0.3 11.5,4 C9,7.7 3,7.7 0.5,4 Z" fill="#cfcdd0"/><circle cx="6" cy="4" r="2.1" fill="#4b474c"/><circle cx="6" cy="4" r="0.9" fill="#cfcdd0"/></svg>
<svg class="a" style="left:75px;top:226.75px" width="14" height="14" viewBox="0 0 14 14"><rect width="14" height="14" fill="#fff"/><path d="M2,7 h10" stroke="#999" stroke-width="1" stroke-dasharray="2 1"/></svg>
<svg class="a" style="left:92px;top:229.75px" width="19" height="9" viewBox="0 0 19 9" fill="none" stroke="#bdbabf" stroke-width="1.1"><path d="M5.5,1 L1.5,4.5 L5.5,8"/><path d="M8,7.5 h1.4 M12,7.5 h1.4 M16,7.5 h1.4" stroke-width="1.4"/></svg>
<svg class="a" style="left:149.5px;top:229.25px" width="9" height="9" viewBox="0 0 9 9"><circle cx="4.5" cy="4.5" r="3.4" fill="#7d7a7f" stroke="#cfcdd0" stroke-width="1.1"/><circle cx="4.5" cy="4.5" r="1.2" fill="#4b474c"/></svg>
<div class="a" style="left:5px;top:242px;width:169px;height:1px;background:#3d3a3f"></div>
<svg class="a" style="left:6.5px;top:246.15px" width="12" height="8" viewBox="0 0 12 8"><path d="M0.5,4 C3,0.3 9,0.3 11.5,4 C9,7.7 3,7.7 0.5,4 Z" fill="#cfcdd0"/><circle cx="6" cy="4" r="2.1" fill="#4b474c"/><circle cx="6" cy="4" r="0.9" fill="#cfcdd0"/></svg>
<svg class="a" style="left:75px;top:243.15px" width="14" height="14" viewBox="0 0 14 14"><rect width="14" height="14" fill="#fff"/><path d="M1,7 h12" stroke="#aaa" stroke-width="2"/><path d="M1,7 h12" stroke="#555" stroke-width="0.8" stroke-dasharray="3 2"/></svg>
<svg class="a" style="left:92px;top:246.15px" width="19" height="9" viewBox="0 0 19 9" fill="none" stroke="#bdbabf" stroke-width="1.1"><path d="M5.5,1 L1.5,4.5 L5.5,8"/><path d="M8,7.5 h1.4 M12,7.5 h1.4 M16,7.5 h1.4" stroke-width="1.4"/></svg>
<svg class="a" style="left:149.5px;top:245.65px" width="9" height="9" viewBox="0 0 9 9"><circle cx="4.5" cy="4.5" r="3.4" fill="#7d7a7f" stroke="#cfcdd0" stroke-width="1.1"/><circle cx="4.5" cy="4.5" r="1.2" fill="#4b474c"/></svg>
<div class="a" style="left:5px;top:258.3px;width:169px;height:1px;background:#3d3a3f"></div>
<svg class="a" style="left:6.5px;top:262.45px" width="12" height="8" viewBox="0 0 12 8"><path d="M0.5,4 C3,0.3 9,0.3 11.5,4 C9,7.7 3,7.7 0.5,4 Z" fill="#cfcdd0"/><circle cx="6" cy="4" r="2.1" fill="#4b474c"/><circle cx="6" cy="4" r="0.9" fill="#cfcdd0"/></svg>
<svg class="a" style="left:75px;top:259.45px" width="14" height="14" viewBox="0 0 14 14"><rect width="14" height="14" fill="#fff"/><path d="M1,5 Q7,10 13,5 L13,8 Q7,12.5 1,8 Z" fill="#4a4a4e"/></svg>
<svg class="a" style="left:92px;top:262.45px" width="19" height="9" viewBox="0 0 19 9" fill="none" stroke="#bdbabf" stroke-width="1.1"><path d="M5.5,1 L1.5,4.5 L5.5,8"/><path d="M8,7.5 h1.4 M12,7.5 h1.4 M16,7.5 h1.4" stroke-width="1.4"/></svg>
<div class="a" style="left:145.5px;top:259.3px;width:28px;height:15.3px;background:#646a5c"></div>
<svg class="a" style="left:148px;top:260.45px" width="12" height="12" viewBox="0 0 12 12"><circle cx="6" cy="6" r="5" fill="none" stroke="#cfcdd0" stroke-width="1.1"/><circle cx="6" cy="6" r="2.6" fill="none" stroke="#cfcdd0" stroke-width="1.1"/></svg>
<div class="a" style="left:161.5px;top:262.95px;width:7px;height:7px;background:#4668d6;border:1px solid #9fb4f2"></div>
<svg class="a" style="left:61.5px;top:181.5px" width="5" height="7" viewBox="0 0 5 7"><path d="M0,0 L5,3.5 L0,7 Z" fill="#eeecef"/></svg>
<div class="a" style="left:20.5px;top:177px;width:1px;height:97.5px;background:#3d3a3f"></div>
<div class="a" style="left:145px;top:177px;width:1px;height:97.5px;background:#3d3a3f"></div>
<div class="a" style="left:37.5px;top:177px;width:4px;height:97.5px;background:#4d6dbb"></div>
<div class="a" style="left:174px;top:176px;width:10px;height:99px;background:#353136"></div>
<svg class="a" style="left:175.5px;top:179px" width="7" height="5" viewBox="0 0 7 5"><path d="M0,5 L7,5 L3.5,0 Z" fill="#eeecef"/></svg>
<div class="a" style="left:174.5px;top:193px;width:9px;height:30px;background:#a5a2a7"></div>
<svg class="a" style="left:175.5px;top:267.5px" width="7" height="5" viewBox="0 0 7 5"><path d="M0,0 L7,0 L3.5,5 Z" fill="#eeecef"/></svg>
<span class="a lbl" style="left:5px;top:277.5px;font-size:10px;color:#d9d7da;line-height:11px;letter-spacing:-0.3px">1 个图层</span>
<svg class="a" style="left:75px;top:276px" width="12" height="12" viewBox="0 0 12 12" fill="none" stroke="#d9d7da" stroke-width="1.4"><circle cx="7" cy="4.8" r="3.3"/><path d="M4.6,7.4 L1,11"/></svg>
<svg class="a" style="left:95px;top:276.5px" width="11" height="11" viewBox="0 0 11 11" fill="none" stroke="#d9d7da" stroke-width="1.2"><rect x="1" y="1" width="9" height="9"/><rect x="3.5" y="3.5" width="5" height="5" fill="#d9d7da"/></svg>
<svg class="a" style="left:114.5px;top:276.5px" width="13" height="11" viewBox="0 0 13 11" fill="#d9d7da"><rect x="5" y="3" width="7.5" height="7"/><path d="M0.5,2.5 h3 v-1.5 l2.5,2.5 l-2.5,2.5 v-1.5 h-3 Z"/></svg>
<svg class="a" style="left:136px;top:276.5px" width="11" height="11" viewBox="0 0 11 11" fill="#d9d7da"><path d="M2,1 H10 V9 H8 V3 H2 Z"/><rect x="0.5" y="4" width="6.5" height="6.5"/></svg>
<svg class="a" style="left:157px;top:276.5px" width="10" height="11" viewBox="0 0 10 11" fill="none" stroke="#6f6c71" stroke-width="1.1"><path d="M0.5,2.5 h9 M3.5,2.5 v-1.5 h3 v1.5 M1.5,2.5 l0.6,8 h5.8 l0.6,-8"/></svg>
<div class="a" style="left:0px;top:290px;width:187px;height:2.5px;background:#2f2c31"></div>
<div class="a" style="left:0px;top:292.5px;width:187px;height:14px;background:#353136"></div>
<div class="a" style="left:1px;top:292.5px;width:33px;height:14px;background:#4b474c"></div>
<svg class="a" style="left:3px;top:295.5px" width="5" height="9" viewBox="0 0 5 9"><path d="M0.5,3.5 L2.5,1 L4.5,3.5 Z M0.5,5.5 L2.5,8 L4.5,5.5 Z" fill="#e2e0e3"/></svg>
<span class="a lbl" style="left:9.5px;top:295px;font-size:10px;color:#efedf0;line-height:11px">渐变</span>
<span class="a lbl" style="left:40px;top:295px;font-size:9.5px;color:#98959a;line-height:11px;letter-spacing:-0.3px">透明度</span>
<svg class="a" style="left:171px;top:296.5px" width="11" height="8" viewBox="0 0 11 8"><path d="M0,2 L3.6,2 L1.8,4.4 Z" fill="#d8d6d9"/><path d="M4.5,1.5 h6 M4.5,4 h6 M4.5,6.5 h6" stroke="#d8d6d9" stroke-width="1.1"/></svg>
<div class="a" style="left:177.5px;top:287.5px;width:26px;height:26px;border-radius:50%;background:radial-gradient(circle at 40% 45%,#58da74,#33c653 70%,#6fe08a 100%)"></div>
<div class="a" style="left:5px;top:313.5px;width:23px;height:22px;background:linear-gradient(90deg,#858585 0,#bdbdbd 20%,#e6e6e6 40%,#c8c8c8 52%,#7c7c7c 72%,#555 88%,#6e6e6e 100%);border:1px solid #d9d7da"></div>
<svg class="a" style="left:31.5px;top:322.5px" width="5" height="4" viewBox="0 0 5 4"><path d="M0,0 L5,0 L2.5,3.5 Z" fill="#e2e0e3"/></svg>
<span class="a lbl" style="left:43.5px;top:315.5px;font-size:10px;color:#e6e4e7;line-height:11px;letter-spacing:0.3px">类型:</span>
<div class="a" style="left:72px;top:313px;width:109px;height:14px;background:#5e5a5f;border:1px solid #3d3a3f;border-radius:2px"></div>
<span class="a lbl" style="left:77px;top:315px;font-size:10px;color:#e6e4e7;line-height:11px">线性</span>
<svg class="a" style="left:173px;top:318px" width="7" height="5" viewBox="0 0 7 5"><path d="M0,0 L7,0 L3.5,4.5 Z" fill="#eeecef"/></svg>
<span class="a lbl" style="left:43.5px;top:335.5px;font-size:10px;color:#8a878b;line-height:11px;letter-spacing:0.3px">描边:</span>
<svg class="a" style="left:73.5px;top:333.5px" width="15" height="13" viewBox="0 0 15 13" fill="none" stroke="#6b676c" stroke-width="1.1"><rect x="0.5" y="0.5" width="14" height="12" fill="#514d52"/><path d="M4,11 V4 H11 M7,11 V7 H11"/></svg>
<svg class="a" style="left:92px;top:333.5px" width="15" height="13" viewBox="0 0 15 13" fill="none" stroke="#6b676c" stroke-width="1.1"><rect x="0.5" y="0.5" width="14" height="12" fill="#514d52"/><path d="M4,11 V4 H11 M7,11 V7 H11"/></svg>
<svg class="a" style="left:111px;top:333.5px" width="15" height="13" viewBox="0 0 15 13" fill="none" stroke="#6b676c" stroke-width="1.1"><rect x="0.5" y="0.5" width="14" height="12" fill="#514d52"/><path d="M4,11 V4 H11 M7,11 V7 H11"/></svg>
<div class="a" style="left:13px;top:349px;width:15px;height:15px;background:#fff;border:1px solid #d9d7da"></div>
<svg class="a" style="left:13px;top:349px" width="15" height="15" viewBox="0 0 15 15"><path d="M0,15 L15,0" stroke="#a3262b" stroke-width="2"/><rect x="4.5" y="4.5" width="6" height="6" fill="#6e3234"/></svg>
<div class="a" style="left:5px;top:341px;width:15px;height:15px;background:linear-gradient(90deg,#858585 0,#bdbdbd 20%,#e6e6e6 40%,#c8c8c8 52%,#7c7c7c 72%,#555 88%,#6e6e6e 100%);border:1px solid #d9d7da"></div>
<svg class="a" style="left:56.5px;top:358.5px" width="11" height="8" viewBox="0 0 11 8" fill="none" stroke="#e2e0e3" stroke-width="1.1"><path d="M0.5,7 H10.5 M0.5,7 L6.5,1"/><path d="M5.5,7 A5,5 0 0 0 4,3.6"/></svg>
<div class="a" style="left:72px;top:354.5px;width:41px;height:13.5px;background:#a9a6ab;border:1px solid #77737a"><span class="a lbl" style="left:2px;top:0;font-size:9.5px;line-height:11px;color:#3a383b;font-family:'Liberation Mono',monospace;letter-spacing:-0.9px">-173.5°</span></div>
<div class="a" style="left:115px;top:354.5px;width:9.5px;height:13.5px;background:#5e5a5f"></div>
<svg class="a" style="left:116.5px;top:359.5px" width="7" height="5" viewBox="0 0 7 5"><path d="M0,0 L7,0 L3.5,4.5 Z" fill="#eeecef"/></svg>
<svg class="a" style="left:10.5px;top:373.5px" width="12" height="10" viewBox="0 0 12 10" fill="#cfcdd0"><rect x="0" y="0" width="4" height="3"/><rect x="0" y="6" width="4" height="3"/><path d="M5,1.5 h6 M5,7.5 h6" stroke="#cfcdd0" stroke-width="1.2"/><path d="M7,3 l3,1.6 l-3,1.6 Z"/></svg>
<div class="a" style="left:72px;top:375px;width:41px;height:13px;background:#858287;border:1px solid #6a666b"></div>
<div class="a" style="left:114.5px;top:375px;width:9.5px;height:13px;background:#5a565b"></div>
<svg class="a" style="left:116px;top:379.5px" width="7" height="5" viewBox="0 0 7 5"><path d="M0,0 L7,0 L3.5,4.5 Z" fill="#8b888d"/></svg>
<svg class="a" style="left:57px;top:376px" width="10" height="10" viewBox="0 0 10 10" fill="none" stroke="#6f6c71" stroke-width="1.1"><ellipse cx="5" cy="5" rx="4" ry="2.6"/></svg>
<svg class="a" style="left:6px;top:392.5px" width="6" height="6" viewBox="0 0 6 6"><path d="M3,0 L6,3 L3,6 L0,3 Z" fill="#e2e0e3"/></svg>
<svg class="a" style="left:28px;top:392.5px" width="6" height="6" viewBox="0 0 6 6"><path d="M3,0 L6,3 L3,6 L0,3 Z" fill="#e2e0e3"/></svg>
<svg class="a" style="left:65.5px;top:392.5px" width="6" height="6" viewBox="0 0 6 6"><path d="M3,0 L6,3 L3,6 L0,3 Z" fill="#e2e0e3"/></svg>
<svg class="a" style="left:119.5px;top:392.5px" width="6" height="6" viewBox="0 0 6 6"><path d="M3,0 L6,3 L3,6 L0,3 Z" fill="#e2e0e3"/></svg>
<svg class="a" style="left:147px;top:392.5px" width="6" height="6" viewBox="0 0 6 6"><path d="M3,0 L6,3 L3,6 L0,3 Z" fill="#e2e0e3"/></svg>
<svg class="a" style="left:155.5px;top:392.5px" width="6" height="6" viewBox="0 0 6 6"><path d="M3,0 L6,3 L3,6 L0,3 Z" fill="#e2e0e3"/></svg>
<div class="a" style="left:6px;top:400.5px;width:154px;height:18.5px;background:linear-gradient(90deg,#151515 0,#151515 1.5%,#e6e6e6 2%,#e6e6e6 6%,#d5d5d5 12%,#5a5a5a 22%,#4a4a4a 30%,#bcbcbc 42%,#f2f2f2 55%,#d0d0d0 62%,#8a8a8a 72%,#777 82%,#b8b8b8 92%,#d6d6d6 100%);border:1px solid #39363b"></div>
<svg class="a" style="left:169.5px;top:403.5px" width="10" height="11" viewBox="0 0 10 11" fill="none" stroke="#cfcdd0" stroke-width="1.1"><path d="M0.5,2.5 h9 M3.5,2.5 v-1.5 h3 v1.5 M1.5,2.5 l0.6,8 h5.8 l0.6,-8"/><path d="M3,5 h4 M3,7.5 h4"/></svg>
<svg class="a" style="left:12.5px;top:420.5px" width="8" height="10" viewBox="0 0 8 10"><path d="M4,0 L8,3.5 L8,10 L0,10 L0,3.5 Z" fill="#e2e0e3" stroke="#39363b" stroke-width="0.6"/><rect x="1.8" y="4.8" width="4.4" height="3.6" fill="#e8e8e8"/></svg>
<svg class="a" style="left:28px;top:420.5px" width="8" height="10" viewBox="0 0 8 10"><path d="M4,0 L8,3.5 L8,10 L0,10 L0,3.5 Z" fill="#e2e0e3" stroke="#39363b" stroke-width="0.6"/><rect x="1.8" y="4.8" width="4.4" height="3.6" fill="#555"/></svg>
<svg class="a" style="left:91.5px;top:420.5px" width="8" height="10" viewBox="0 0 8 10"><path d="M4,0 L8,3.5 L8,10 L0,10 L0,3.5 Z" fill="#e2e0e3" stroke="#39363b" stroke-width="0.6"/><rect x="1.8" y="4.8" width="4.4" height="3.6" fill="#f4f4f4"/></svg>
<svg class="a" style="left:137px;top:420.5px" width="8" height="10" viewBox="0 0 8 10"><path d="M4,0 L8,3.5 L8,10 L0,10 L0,3.5 Z" fill="#e2e0e3" stroke="#39363b" stroke-width="0.6"/><rect x="1.8" y="4.8" width="4.4" height="3.6" fill="#777"/></svg>
<svg class="a" style="left:154.5px;top:420.5px" width="8" height="10" viewBox="0 0 8 10"><path d="M4,0 L8,3.5 L8,10 L0,10 L0,3.5 Z" fill="#e2e0e3" stroke="#39363b" stroke-width="0.6"/><rect x="1.8" y="4.8" width="4.4" height="3.6" fill="#ccc"/></svg>
<span class="a lbl" style="left:41.5px;top:434px;font-size:10px;font-weight:bold;color:#d9d7da;line-height:11px;font-family:'Liberation Mono',monospace">Y</span>
<div class="a" style="left:54px;top:437.5px;width:81px;height:4px;background:linear-gradient(90deg,#34393c,#3e4030 50%,#4a4a22);border-top:1px solid #2c292d"></div>
<svg class="a" style="left:63px;top:442px" width="6" height="6" viewBox="0 0 6 6"><path d="M3,0 L6,3 L6,5.5 L0,5.5 L0,3 Z" fill="#f2f0f3"/></svg>
<div class="a" style="left:140.5px;top:433px;width:25.5px;height:13px;background:#a9a6ab;border:1px solid #77737a;overflow:hidden"><span class="a lbl" style="left:2px;top:0;font-size:9px;line-height:11px;color:#3a383b;font-family:'Liberation Mono',monospace;letter-spacing:-1px">14</span></div>
<span class="a lbl" style="left:168px;top:434.5px;font-size:8px;color:#d9d7da;line-height:11px;font-weight:bold">%</span>
<span class="a lbl" style="left:41.5px;top:453.5px;font-size:10px;font-weight:bold;color:#d9d7da;line-height:11px;font-family:'Liberation Mono',monospace">K</span>
<div class="a" style="left:54px;top:457px;width:81px;height:4px;background:linear-gradient(90deg,#c9d9d8,#7d8a8b 45%,#0e1011);border-top:1px solid #2c292d"></div>
<svg class="a" style="left:112.5px;top:461.5px" width="6" height="6" viewBox="0 0 6 6"><path d="M3,0 L6,3 L6,5.5 L0,5.5 L0,3 Z" fill="#f2f0f3"/></svg>
<div class="a" style="left:140.5px;top:452.5px;width:25.5px;height:13px;background:#a9a6ab;border:1px solid #77737a;overflow:hidden"><span class="a lbl" style="left:2px;top:0;font-size:9px;line-height:11px;color:#3a383b;font-family:'Liberation Mono',monospace;letter-spacing:-1px">75.09</span></div>
<span class="a lbl" style="left:168px;top:454px;font-size:8px;color:#d9d7da;line-height:11px;font-weight:bold">%</span>
<div class="a" style="left:4px;top:475.5px;width:10.5px;height:6px;background:#fff;overflow:hidden"><svg width="11" height="11" viewBox="0 0 11 11"><path d="M0,11 L11,0" stroke="#c0282d" stroke-width="1.6"/></svg></div>
<div class="a" style="left:14.5px;top:475.5px;width:10.5px;height:6px;background:#000"></div>
<div class="a" style="left:25px;top:475.5px;width:10px;height:6px;background:#fff"></div>
<svg class="a" style="left:5px;top:371px" width="130" height="64" viewBox="818 394 130 64">
<g fill="#e4e3e5" fill-opacity="0.93">
<rect x="821.4" y="423.8" width="4.8" height="26.5"/>
<ellipse cx="848.7" cy="406" rx="5.6" ry="8.4" transform="rotate(-6 848.7 406)"/>
<ellipse cx="862.8" cy="406" rx="5.6" ry="8.4" transform="rotate(6 862.8 406)"/>
<ellipse cx="835.5" cy="417.5" rx="4.8" ry="7" transform="rotate(-30 835.5 417.5)"/>
<ellipse cx="873.3" cy="420.5" rx="4.8" ry="7" transform="rotate(30 873.3 420.5)"/>
<path d="M855,419 C847,419 844,425 839.5,429 C834,434 832.2,438 832.6,444 C833,451 840,454 847,452.6 C851,452 859,452 863,452.6 C870,454 876.4,451 876.4,444 C876.8,438 875,434 869.5,429 C866,425 863,419 855,419 Z"/>
</g>
<text x="840.5" y="447.3" font-family="'Liberation Sans',sans-serif" font-weight="bold" font-size="25" fill="#4a464b" textLength="28" lengthAdjust="spacingAndGlyphs">du</text>
<text x="883.5" y="448.5" font-family="'Liberation Sans','Noto Sans CJK SC',sans-serif" font-weight="bold" font-size="28.5" fill="#fbfbfc" textLength="58.5" lengthAdjust="spacingAndGlyphs">经验</text>
</svg>
</div><!--/right-->
</body>
</html>
